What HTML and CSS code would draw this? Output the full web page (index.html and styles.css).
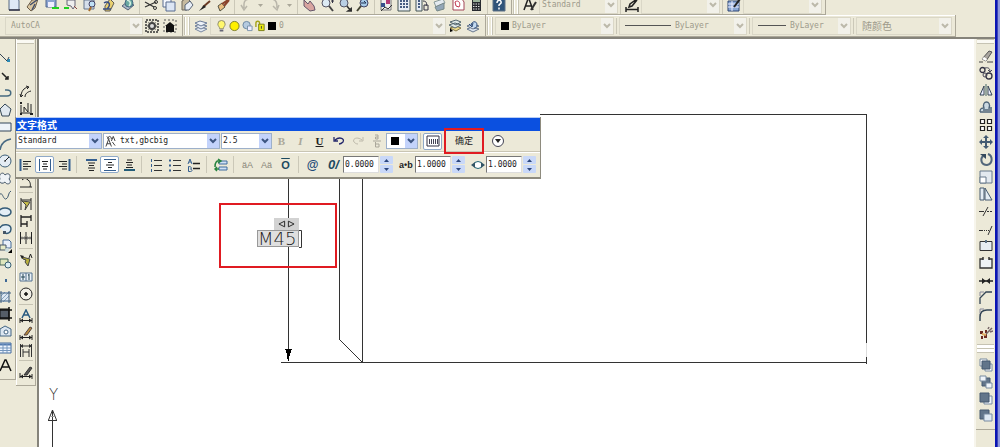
FILE: index.html
```html
<!DOCTYPE html>
<html lang="zh-CN">
<head>
<meta charset="utf-8">
<title>文字格式</title>
<link rel="stylesheet" href="styles.css">
</head>
<body>
<div class="window">
<div class="app">
  <header class="bars">
    <div class="bar-row bar-row-top">
      <div class="bar">
        <div class="tools roomy">
          <button class="tool" aria-label="New"><svg viewBox="0 0 14 14"><path d="M2 0h9l1 3v9H2z" fill="#dfe8f5" stroke="#566884"/><path d="M2 12h11" stroke="#334" stroke-width="1.5"/></svg></button>
          <button class="tool" aria-label="Open"><svg viewBox="0 0 14 14"><path d="M1 9 6 2l6-1-3 9-4 3z" fill="#d9c6a0" stroke="#6b5d49"/><path d="M4 7 11 2M6 12l3-6" stroke="#43506c" stroke-width="1.5"/></svg></button>
          <button class="tool" aria-label="Save"><svg viewBox="0 0 14 14"><path d="M1 0h10v9H1z" fill="#8ba3cf" stroke="#51678f"/><path d="M3 4h6v5H3z" fill="#eef"/><path d="M7 10h7" stroke="#20d020" stroke-width="2"/></svg></button>
          <button class="tool" aria-label="Plot"><svg viewBox="0 0 14 14"><path d="M0 10h5" stroke="#20d020" stroke-width="2"/><path d="M3 7V2h8v6l-2 3-2-3z" fill="#eee" stroke="#667"/><path d="m10 8 3 3" stroke="#844"/></svg></button>
          <button class="tool" aria-label="Preview"><svg viewBox="0 0 14 14"><path d="M1 2h10v9H1z" fill="#d5dfeb" stroke="#65758b"/><circle cx="9" cy="6" r="3" fill="#bfe0f5" stroke="#446"/><path d="m8 9-2 4" stroke="#a76d2c" stroke-width="2"/></svg></button>
          <button class="tool" aria-label="Publish"><svg viewBox="0 0 14 14"><path d="m3 8 5-7 4 4-4 8H3z" fill="#e9d070" stroke="#5f5b52"/><path d="M2 5c4-3 8 1 3 6M1 11h8" fill="none" stroke="#374d83" stroke-width="1.5"/></svg></button>
          <button class="tool" aria-label="Publish web"><svg viewBox="0 0 14 14"><path d="m1 8 5-4 7 3-6 5z" fill="#a9b6c7" stroke="#536277"/><circle cx="8" cy="5" r="4" fill="#69a8a2" stroke="#466983"/><path d="M6 2c4 1 4 4 2 6" fill="none" stroke="#d7eee0" stroke-width="1.5"/></svg></button>
        </div>
        <span class="rule"></span>
        <div class="tools">
          <button class="tool" aria-label="Cut"><svg viewBox="0 0 14 14"><path d="M1 4 10 9M1 9l11-5" stroke="#333" stroke-width="1.3"/><circle cx="11" cy="10" r="1.5" fill="none" stroke="#333"/><circle cx="12" cy="4" r="1.5" fill="none" stroke="#333"/></svg></button>
          <button class="tool" aria-label="Copy"><svg viewBox="0 0 14 14"><path d="M1 1h8v8H1z" fill="#f4f7fd" stroke="#586d90"/><path d="M4 4h9v9H4z" fill="#dce6f5" stroke="#586d90"/></svg></button>
          <button class="tool" aria-label="Paste"><svg viewBox="0 0 14 14"><path d="m2 3 5-3 4 4-4 8H2z" fill="#c6ba9f" stroke="#6d675d"/><path d="m5 7 5-4 3 4-4 5H5z" fill="#e8eef6" stroke="#596475"/></svg></button>
          <button class="tool" aria-label="Match"><svg viewBox="0 0 14 14"><path d="M12 3 5 9" stroke="#6b3b24" stroke-width="2"/><path d="m6 7-5 6 7-4z" fill="#222"/></svg></button>
          <button class="tool" aria-label="Block editor"><svg viewBox="0 0 14 14"><path d="m2 8 4-3 3 4-5 4z" fill="#eabf82" stroke="#554"/><path d="m6 6 6-4M8 8l5-6" stroke="#8b442d" stroke-width="2"/></svg></button>
        </div>
        <span class="rule"></span>
        <div class="tools">
          <button class="tool" aria-label="Undo"><svg viewBox="0 0 14 14"><path d="M10 1C4 2 5 6 5 10M2 7l3 5 3-4" fill="none" stroke="#b9b6aa" stroke-width="1.5"/></svg></button>
          <button class="caret" aria-label="Undo list"><svg viewBox="0 0 5 3"><path d="M0 0h5L2.500 3z" fill="#aaa799"/></svg></button>
          <button class="tool" aria-label="Redo"><svg viewBox="0 0 14 14"><path d="M4 1c5 1 5 5 5 9M5 8l4 4 2-5" fill="none" stroke="#b9b6aa" stroke-width="1.5"/></svg></button>
          <button class="caret" aria-label="Redo list"><svg viewBox="0 0 5 3"><path d="M0 0h5L2.500 3z" fill="#aaa799"/></svg></button>
        </div>
        <span class="rule"></span>
        <div class="tools">
          <button class="tool" aria-label="Pan"><svg viewBox="0 0 14 14"><path d="m2 2 4 4 2-3 4 5 1 4-5 1-6-5z" fill="#d8a5a0" stroke="#64566b"/></svg></button>
          <button class="tool" aria-label="Zoom realtime"><svg viewBox="0 0 14 14"><circle cx="6" cy="5" r="4" fill="#dceaf4" stroke="#556"/><path d="m9 8 4 5" stroke="#444" stroke-width="2"/><path d="M11 3h3M12.500 1v4" stroke="#334"/></svg></button>
          <button class="tool" aria-label="Zoom window"><svg viewBox="0 0 14 14"><circle cx="6" cy="5" r="4" fill="#b9cfe4" stroke="#556"/><path d="m9 8 3 4M10 13h4v-3z" stroke="#333" stroke-width="1.5"/></svg></button>
          <button class="tool" aria-label="Zoom previous"><svg viewBox="0 0 14 14"><circle cx="8" cy="5" r="4" fill="#a5cae8" stroke="#446"/><path d="m5 8-4 5" stroke="#443" stroke-width="2"/><path d="M5 5h5L8 3" stroke="#235" fill="none"/></svg></button>
        </div>
        <span class="rule"></span>
        <div class="tools">
          <button class="tool" aria-label="Properties"><svg viewBox="0 0 14 14"><path d="M2 1h10v11H2z" fill="#eee" stroke="#777"/><path d="M2 5h4v4H2z" fill="#36508c"/><path d="M7 2h4v4H7z" fill="#b13a76"/><path d="m2 13 4-4 3 2 4-4" stroke="#333" fill="none"/></svg></button>
          <button class="tool" aria-label="Design center"><svg viewBox="0 0 14 14"><path d="M1 0h12v13H1z" fill="#e8edf4" stroke="#455"/><path d="M3 3h2M6 3h2M9 3h2M3 6h2M6 6h2M9 6h2M3 9h2M6 9h2M9 9h2" stroke="#465d83" stroke-width="2"/></svg></button>
          <button class="tool" aria-label="Tool palettes"><svg viewBox="0 0 14 14"><path d="M1 0h6v13H1z" fill="#e8edf4" stroke="#455"/><path d="M3 3h2M3 6h2M3 9h2" stroke="#465d83" stroke-width="2"/><path d="M8 3c4 0 4 3 3 5M9 7h4v5H9z" fill="none" stroke="#334"/></svg></button>
          <button class="tool" aria-label="Sheet set"><svg viewBox="0 0 14 14"><path d="m1 4 9-3 2 4-9 4z" fill="#e4eaf0" stroke="#899"/><path d="m2 9 9-4v6l-7 2z" fill="#93a6b7" stroke="#788"/></svg></button>
          <button class="tool" aria-label="Markup"><svg viewBox="0 0 14 14"><path d="M2 1h9l2 3v8H2z" fill="#fff" stroke="#a34759"/><path d="M4 4c4-3 6 2 4 5L5 8z" fill="none" stroke="#c1374e"/></svg></button>
          <button class="tool" aria-label="Calculator"><svg viewBox="0 0 14 14"><path d="M3 0h9v13H3z" fill="#26292e"/><path d="M4 2h7v2H4z" fill="#9ab29a"/><path d="M4 6h7M4 8.500h7M4 11h7" stroke="#ddd" stroke-dasharray="1.500 1"/></svg></button>
        </div>
        <span class="rule"></span>
        <button class="tool" aria-label="Help"><svg viewBox="0 0 14 14"><path d="M1 0h12v13H1z" fill="#2f5379" stroke="#5f7387"/><path d="M5 5c0-4 5-3 4 0L7 7v1M7 9.500v2" fill="none" stroke="#fff" stroke-width="1.500"/></svg></button>
      </div>
      <div class="bar">
        <span class="grip"></span>
        <button class="tool" aria-label="Text style"><svg viewBox="0 0 14 14"><path d="m1 12 4-11h1l4 11M3 8h6" fill="none" stroke="#222" stroke-width="1.500"/><path d="m13 4-5 8" stroke="#333" stroke-width="2"/></svg></button>
        <span class="combo off w-style"><select aria-label="Text style name" disabled><option>Standard</option></select></span>
        <span class="rule"></span>
        <button class="tool" aria-label="Dimension style"><svg viewBox="0 0 14 14"><path d="m12 2-5 6-3 1 1-3 7-5M1 9v5M13 9v5M1 11.500h12" fill="none" stroke="#222" stroke-width="1.500"/></svg></button>
        <span class="combo off w-style"><select aria-label="Dimension style name" disabled><option></option></select></span>
        <span class="rule"></span>
        <button class="tool" aria-label="Table style"><svg viewBox="0 0 14 14"><path d="M1 3h11v10H1z" fill="#8ba8d5" stroke="#2e4674"/><path d="M1 6h11M1 9h11M5 3v10" stroke="#eef"/><path d="m13 1-6 8" stroke="#222" stroke-width="2"/></svg></button>
        <span class="combo off w-style"><select aria-label="Table style name" disabled><option></option></select></span>
      </div>
    </div>
    <div class="bar-row bar-row-second">
      <div class="bar">
        <span class="combo off w-space"><select aria-label="Workspace" disabled><option>AutoCA</option></select></span>
        <button class="tool" aria-label="Workspace settings"><svg viewBox="0 0 14 14"><path d="M1 1h12v12H1z" fill="none" stroke="#333" stroke-width="1.500" stroke-dasharray="2 1"/><circle cx="7" cy="7" r="3" fill="#ddd" stroke="#444" stroke-width="2"/><path d="M7 2v2M7 10v2M2 7h2M10 7h2M3.500 3.500 5 5M9 9l1.500 1.500M3.500 10.500 5 9M9 5l1.500-1.500" stroke="#444"/></svg></button>
        <button class="tool" aria-label="My workspace"><svg viewBox="0 0 14 14"><path d="M1 1h12v12H1z" fill="none" stroke="#555" stroke-dasharray="2 2"/><path d="M2 7 7 3l5 4h-1v6H3V7z" fill="#111"/></svg></button>
      </div>
      <div class="bar">
        <span class="grip"></span>
        <button class="tool" aria-label="Layer manager"><svg viewBox="0 0 14 14"><path d="m1 10 5-2 7 2-6 3z" fill="#e5ebf2" stroke="#7888a0"/><path d="m1 7 5-2 7 2-6 3z" fill="#e5ebf2" stroke="#6a7b98"/><path d="m1 4 5-2 7 2-6 3z" fill="#edf2f8" stroke="#6a7b98"/></svg></button>
        <span class="combo off w-layer">
          <svg class="layer-mark" viewBox="0 0 12 12"><path d="M4 9c0-2-2-3-2-5a4 4 0 0 1 8 0c0 2-2 3-2 5z" fill="#fff86b" stroke="#88866b"/><path d="M4 10h4v2H4z" fill="#667"/></svg>
          <svg class="layer-mark" viewBox="0 0 12 12"><circle cx="6" cy="6" r="5" fill="#fff000" stroke="#77782a"/></svg>
          <svg class="layer-mark" viewBox="0 0 12 12"><circle cx="5" cy="5" r="4" fill="#b6cbe0" stroke="#6682a0"/><path d="M6 6h5v5H6z" fill="#eef" stroke="#7890aa"/></svg>
          <svg class="layer-mark" viewBox="0 0 12 12"><path d="M1 7V3c0-3 4-3 4 0v3" fill="none" stroke="#a6a316" stroke-width="1.500"/><path d="M4 4h6v7H4z" fill="#eaea10" stroke="#777b16"/><path d="M7 6v3" stroke="#444"/></svg>
          <span class="swatch"></span>
          <select aria-label="Layer" disabled><option>0</option></select>
        </span>
        <button class="tool" aria-label="Make current"><svg viewBox="0 0 14 14"><path d="m2 9 6-2 5 2-5 3z" fill="#ecda8b" stroke="#86794a"/><path d="m1 6 6-2 6 2-6 3zM2 3l6-2 5 2-5 3z" fill="#dfe9e8" stroke="#53666f"/><path d="M2 13v-4l3 3z"/></svg></button>
        <button class="tool" aria-label="Layer previous"><svg viewBox="0 0 14 14"><path d="m1 10 5-2 7 2-6 3z" fill="#dce4ed" stroke="#66758b"/><path d="m1 7 5-2 7 2-6 3z" fill="#dce4ed" stroke="#66758b"/><path d="M5 7c0-5 6-6 6-1 0 2-2 4-3 3M3 5l3 3 1-4" fill="#c3daf0" stroke="#2e4c78"/></svg></button>
      </div>
      <div class="bar">
        <span class="grip"></span>
        <span class="combo off w-color"><span class="swatch"></span><select aria-label="Color" disabled><option>ByLayer</option></select></span>
        <span class="rule"></span>
        <span class="combo off w-type"><span class="line line-long"></span><select aria-label="Linetype" disabled><option>ByLayer</option></select></span>
        <span class="rule"></span>
        <span class="combo off w-weight"><span class="line line-short"></span><select aria-label="Lineweight" disabled><option>ByLayer</option></select></span>
        <span class="rule"></span>
        <span class="combo off w-plot"><select class="cjk" aria-label="Plot style" disabled><option>随颜色</option></select></span>
      </div>
    </div>
  </header>

  <div class="work">
    <nav class="palette draw" aria-label="Draw">
      <button aria-label="Line"><svg viewBox="0 0 14 14"><path d="M2 2 9 9l2-4" fill="none" stroke="#345"/><path d="M9 9h2V7" stroke="#2b8ab5" stroke-width="2" fill="none"/></svg></button>
      <button aria-label="Construction line"><svg viewBox="0 0 14 14"><path d="m4 4 6 6M10 7v3H7" stroke="#222" fill="none" stroke-width="1.500"/></svg></button>
      <button aria-label="Polyline"><svg viewBox="0 0 14 14"><path d="M1 10h8c5 0 5-6 0-6H7" fill="none" stroke="#456a80" stroke-width="1.500"/></svg></button>
      <button aria-label="Polygon"><svg viewBox="0 0 14 14"><path d="m7 1 6 5-2 7H4L2 6z" fill="#e0e8ef" stroke="#344757"/></svg></button>
      <button aria-label="Rectangle"><svg viewBox="0 0 14 14"><path d="M1 3h12v8H1z" fill="#eef3f8" stroke="#33465b"/></svg></button>
      <button aria-label="Arc"><svg viewBox="0 0 14 14"><path d="M2 13C3 6 7 3 13 2" fill="none" stroke="#476983" stroke-width="1.500"/></svg></button>
      <button aria-label="Circle"><svg viewBox="0 0 14 14"><circle cx="7" cy="7" r="6" fill="#e5edf4" stroke="#3e607a"/><path d="m7 7 4-4M6 7h2" stroke="#222"/></svg></button>
      <button aria-label="Revision cloud"><svg viewBox="0 0 14 14"><path d="M2 8C0 3 5 0 7 4c3-3 7 0 4 4 4 4-2 7-4 3-3 3-7 0-5-3z" fill="#eff3f6" stroke="#455769"/></svg></button>
      <button aria-label="Spline"><svg viewBox="0 0 14 14"><path d="M1 8c3-7 4 4 7 3s2-7 5-8" fill="none" stroke="#405b70"/></svg></button>
      <button aria-label="Ellipse"><svg viewBox="0 0 14 14"><ellipse cx="7" cy="7" rx="6" ry="4" fill="#e3eef6" stroke="#345b77" stroke-width="1.500"/></svg></button>
      <button aria-label="Ellipse arc"><svg viewBox="0 0 14 14"><path d="M2 6C4 1 13 2 13 7c0 4-4 5-6 4" fill="#e3eef6" stroke="#345b77" stroke-width="1.500"/><path d="M5 9h3v3H5z" fill="#456"/></svg></button>
      <button aria-label="Insert block"><svg viewBox="0 0 14 14"><path d="M5 1h6l2 2v6H5z" fill="#e8f0fa" stroke="#456a94"/><path d="M2 6h6v5H2z" fill="#e6ebc7" stroke="#456"/><circle cx="9" cy="11" r="2" fill="#cdd"/><path d="M14 10v4h-4z"/></svg></button>
      <button aria-label="Make block"><svg viewBox="0 0 14 14"><path d="M2 3h8v6H2z" fill="#dfe7bd" stroke="#45655a"/><circle cx="10" cy="9" r="3" fill="#dceef1" stroke="#396073"/></svg></button>
      <button aria-label="Point"><svg viewBox="0 0 14 14"><path d="M7 6h2v3H7z" fill="#3e6896"/></svg></button>
      <button aria-label="Hatch"><svg viewBox="0 0 14 14"><path d="M3 2h8v10H3z" fill="#dbe6f1"/><path d="m3 6 4-4M3 10l8-8M5 12l6-6" stroke="#8aa6c0"/><path d="M1 3h12M1 11h12M3 1v12M11 1v12" stroke="#3f5f7e"/></svg></button>
      <button aria-label="Gradient"><svg viewBox="0 0 14 14"><path d="M2 2h9v10H2z" fill="#555d68" stroke="#111"/><path d="M1 3h13M1 11h13M11 0v14" stroke="#111" stroke-width="1.500"/></svg></button>
      <button aria-label="Region"><svg viewBox="0 0 14 14"><path d="M2 12V5l5-3 6 3v7z" fill="#dbe6f1" stroke="#426482"/><circle cx="8" cy="8" r="2" fill="#fff" stroke="#426482"/></svg></button>
      <button aria-label="Table"><svg viewBox="0 0 14 14"><path d="M1 2h12v10H1z" fill="#eef5ff" stroke="#426b9e"/><path d="M1 3.500h12" stroke="#527bb0" stroke-width="2"/><path d="M1 7h12M1 9.500h12M5 3v9M9 3v9" stroke="#7496bd"/></svg></button>
      <button aria-label="Multiline text"><svg viewBox="0 0 14 14"><path d="m2 13 5-11h1l5 11M4 9h7" fill="none" stroke="#111" stroke-width="1.500"/></svg></button>
    </nav>
    <nav class="palette dims" aria-label="Dimension">
      <span class="grip-flat"></span>
      <div class="stack">
        <button aria-label="Arc length"><svg viewBox="0 0 14 14"><path d="M2 12C2 6 5 3 9 2M6 12c0-3 2-5 6-6M7 1l3 1-2 2M1 9l1 3 2-2" fill="none" stroke="#222"/></svg></button>
        <button aria-label="Ordinate"><svg viewBox="0 0 14 14"><path d="M2 3v8h11M5 10V5l4 5V1M12 2v8" fill="none" stroke="#222"/><path d="M1 1h2M1 12h2M11 12h3" stroke="#222" stroke-width="2"/></svg></button>
        <button aria-label="Radius"><svg viewBox="0 0 14 14"><circle cx="7" cy="7" r="5" fill="none" stroke="#222"/></svg></button>
        <button aria-label="Jogged"><svg viewBox="0 0 14 14"><path d="m2 12 5-7v5l5-7" fill="none" stroke="#222"/></svg></button>
        <button aria-label="Diameter"><svg viewBox="0 0 14 14"><circle cx="7" cy="7" r="5" fill="none" stroke="#222"/></svg></button>
      </div>
      <div class="stack">
        <button aria-label="Angular"><svg viewBox="0 0 14 14"><path d="m2 3 2-2M1 12h12M8 4c3 2 4 5 3 8M3 5c3-3 5-1 7 1" fill="none" stroke="#222"/></svg></button>
      </div>
      <div class="stack">
        <button aria-label="Quick dimension"><svg viewBox="0 0 14 14"><path d="M2 1v12M12 1v12M2 3h10" stroke="#222"/><path d="m3 4 8 1-5 8 1-5z" fill="#c9bf4a" stroke="#444"/></svg></button>
        <button aria-label="Baseline"><svg viewBox="0 0 14 14"><path d="M2 1v12M8 7v6M12 1v6M2 3h10M2 10h6" stroke="#222" stroke-width="1.300"/></svg></button>
        <button aria-label="Continue"><svg viewBox="0 0 14 14"><path d="M1.500 1v12M7 1v12M12.500 1v12M1 7h12" stroke="#222"/><path d="M3 5.500v3M5.500 5.500v3M8.500 5.500v3M11 5.500v3" stroke="#777"/></svg></button>
      </div>
      <div class="stack">
        <button aria-label="Leader"><svg viewBox="0 0 14 14"><path d="m3 4 8 2-2 7-3-4 1-2-3-1z" fill="#b9b03c" stroke="#444"/><path d="m1 2 4 1-2 3z" fill="#222"/><path d="m10 5 1.500-4L13 5" fill="none" stroke="#222"/></svg></button>
        <button aria-label="Tolerance"><svg viewBox="0 0 14 14"><path d="M1 3h12v8H1zM7 3v8" fill="#eaf1f7" stroke="#53718e"/><path d="M4 4v6M2 7h4M10 4v6M9 5h1" stroke="#245"/></svg></button>
        <button aria-label="Center mark"><svg viewBox="0 0 14 14"><circle cx="7" cy="7" r="6" fill="#f2f0e8" stroke="#222"/><path d="M7 5v4M5 7h4" stroke="#111" stroke-width="1.500"/></svg></button>
      </div>
      <div class="stack">
        <button aria-label="Dimension edit"><svg viewBox="0 0 14 14"><path d="m3 9 4-8 4 8M5 6h4" fill="none" stroke="#285a80" stroke-width="1.500"/><path d="M1 9v5M13 9v5M1 11.500h12" stroke="#222"/><path d="m1 11.500 3-2v4zM13 11.500l-3-2v4z" fill="#222"/></svg></button>
        <button aria-label="Text edit"><svg viewBox="0 0 14 14"><path d="m5 9 6-8 2 1-5 7z" fill="#ba8b38" stroke="#544"/><path d="M1 9v5M13 9v5M1 11.500h12" stroke="#222"/><path d="m1 11.500 3-2v4zM13 11.500l-3-2v4z" fill="#222"/></svg></button>
        <button aria-label="Dimension update"><svg viewBox="0 0 14 14"><path d="M1.500 1v13M12.500 1v13M1 3h12M4 6v8M10 6v8M4 9h6" stroke="#333"/><path d="m1 3 3-2v4zM13 3l-3-2v4z" fill="#333"/></svg></button>
      </div>
      <div class="stack">
        <button aria-label="Style manager"><svg viewBox="0 0 14 14"><path d="m5 10 6-8 2 1-5 7z" fill="#555" stroke="#333"/><path d="M1 8v5M13 9v5M1 11.500h12" stroke="#222"/><path d="m1 11.500 3-2v4zM13 11.500l-3-2v4z" fill="#222"/></svg></button>
      </div>
    </nav>

    <main class="canvas">
      <svg class="sheet" aria-hidden="true">
        <g transform="translate(-39 -39)" fill="none" stroke="#333" shape-rendering="crispEdges">
          <path d="M288.500 150V350M281 362.500H867M362.500 150V362M339.500 150V340M540 114.500H866.500V343M866.500 357V364"/>
          <path d="M866.500 343V357" stroke="#ddd"/>
          <path d="m339.500 339.500 23 23" shape-rendering="auto"/>
          <path d="M285 349h7l-2 5-2 9-1-9z" fill="#000" stroke="none"/>
          <path d="M52.500 410V447M48 420.500h9M48.500 420l4-10 4 10" shape-rendering="auto"/>
          <path d="M50.500 416h4" stroke="#999"/>
        </g>
        <text class="axis" x="10" y="361">Y</text>
      </svg>
      <div class="callout">
        <div class="mtext">
          <div class="stretch"><svg viewBox="0 0 18 8"><path d="M7 1v6L1 4zM11 1v6l6-3z" fill="none" stroke="#222"/></svg></div>
          <div class="entry"><input aria-label="Text" value="M45"><svg class="cursor" viewBox="0 0 4 18"><path d="M0 .5h2.500v17H0" fill="none" stroke="#333"/></svg></div>
        </div>
      </div>
    </main>

    <nav class="palette modify" aria-label="Modify">
      <span class="grip-flat"></span>
      <div class="spread">
        <button aria-label="Erase"><svg viewBox="0 0 14 14"><path d="M0 13h4M8 13h6" stroke="#444"/><path d="m3 10 7-8 3 1-6 9z" fill="#aaa6a0" stroke="#555"/><path d="m3 10 2-2 3 2-1 2z" fill="#fff"/></svg></button>
        <button aria-label="Copy object"><svg viewBox="0 0 14 14"><circle cx="3.500" cy="4" r="2.500" fill="none" stroke="#334" stroke-width="1.300"/><circle cx="10" cy="10" r="3" fill="none" stroke="#334" stroke-width="1.300"/><circle cx="6" cy="9" r="2" fill="none" stroke="#445"/><path d="M6 2c4-1 5 1 5 4M9 4l2 2 2-2" fill="none" stroke="#445"/></svg></button>
        <button aria-label="Mirror"><svg viewBox="0 0 14 14"><path d="M5 3v9H1zM9 3v9h4z" fill="#eef" stroke="#345"/><path d="M7 1v12" stroke="#466"/></svg></button>
        <button aria-label="Offset"><svg viewBox="0 0 14 14"><path d="M1 12h12M1 12c0-4 2-4 4-4-3-8 8-8 5 0h3M4 10h9" fill="#cbd9e2" stroke="#4e6479" stroke-width="1.300"/></svg></button>
        <button aria-label="Array"><svg viewBox="0 0 14 14"><path d="M1.500 1.500h4v4h-4zM8.500 1.500h4v4h-4zM1.500 8.500h4v4h-4zM8.500 8.500h4v4h-4z" fill="#fff" stroke="#222" stroke-width="1.200"/></svg></button>
        <button aria-label="Move"><svg viewBox="0 0 14 14"><path d="M7 2v10M2 7h10" stroke="#445b73" stroke-width="2"/><path d="m7 0 3 3H4zM7 14l3-3H4zM0 7l3-3v6zM14 7l-3-3v6z" fill="#445b73"/></svg></button>
        <button aria-label="Rotate"><svg viewBox="0 0 14 14"><path d="M9 2c5 2 5 10-1 11-6 0-7-6-4-9" fill="none" stroke="#53677b" stroke-width="2"/><path d="M1 2h6v5z" fill="#35495d"/></svg></button>
        <button aria-label="Scale"><svg viewBox="0 0 14 14"><path d="M1 1h12v12H1z" fill="#e3e9ef" stroke="#67798b"/><path d="M1 7h6v6H1z" fill="#fff" stroke="#67798b"/></svg></button>
        <button aria-label="Stretch"><svg viewBox="0 0 14 14"><path d="M1 1h4v12H1zM6 1l7 12H6z" fill="#e5edf3" stroke="#465b70"/></svg></button>
        <button aria-label="Trim"><svg viewBox="0 0 14 14"><path d="M0 7.500h5M4 12 9 3" stroke="#333"/><path d="M8 7.500h6" stroke="#333" stroke-dasharray="2 1"/></svg></button>
        <button aria-label="Extend"><svg viewBox="0 0 14 14"><path d="M0 8.500h4M9 13l4-9" stroke="#333"/><path d="M5 8.500h5" stroke="#333" stroke-dasharray="1 1"/></svg></button>
        <button aria-label="Break at point"><svg viewBox="0 0 14 14"><path d="M1 2.500h12v9H1z" fill="#e8edf2" stroke="#333"/><path d="M6 1h2v3H6z" fill="#607488"/></svg></button>
        <button aria-label="Break"><svg viewBox="0 0 14 14"><path d="M4 3H1v9h12V3h-3" fill="#eef2f5" stroke="#333" stroke-width="1.300"/><path d="M4 1v3M10 1v3" stroke="#333" stroke-width="1.500"/></svg></button>
        <button aria-label="Join"><svg viewBox="0 0 14 14"><path d="M0 7h14" stroke="#222" stroke-width="1.500"/><path d="m3 4 4 3-4 3zM11 4 7 7l4 3z" fill="#222"/></svg></button>
        <button aria-label="Chamfer"><svg viewBox="0 0 14 14"><path d="M1 13V7l6-6h6" fill="none" stroke="#345" stroke-width="1.300"/><path d="M1 5V1h4" stroke="#889" fill="none"/></svg></button>
        <button aria-label="Fillet"><svg viewBox="0 0 14 14"><path d="M1 13V9c0-5 3-7 7-7h5" fill="none" stroke="#345" stroke-width="1.500"/><path d="M1 5V1h4" stroke="#889" fill="none"/></svg></button>
        <button aria-label="Explode"><svg viewBox="0 0 14 14"><path d="M1 5h3v3H1zM5 8h3v4H5zM2 10h2v3H2zM6 4h2v3H6z" fill="#6b2922"/><path d="m7 8 6-6M9 3l1-2M11 6l3-1" stroke="#766" stroke-width="1.500"/><path d="m3 8 4 1" stroke="#dfab60" stroke-width="2"/></svg></button>
      </div>
      <span class="grip-flat grip-double"></span>
      <div class="spread order">
        <button aria-label="Bring to front"><svg viewBox="0 0 14 14"><path d="M1 1h7v7H1zM6 6h7v7H6z" fill="#fff" stroke="#788ba0"/><path d="M3 3h8v8H3z" fill="#62758a" stroke="#445970"/></svg></button>
        <button aria-label="Send to back"><svg viewBox="0 0 14 14"><path d="M3 3h8v8H3z" fill="#62758a" stroke="#445970"/><path d="M1 1h6v5H1zM7 8h6v5H7z" fill="#eff4fa" stroke="#788ba0"/></svg></button>
        <button aria-label="Bring above"><svg viewBox="0 0 14 14"><path d="M5 4h8v8H5z" fill="#eef4fb" stroke="#788ba0"/><path d="M1 1h9v9H1z" fill="#62758a" stroke="#445970"/></svg></button>
        <button aria-label="Send under"><svg viewBox="0 0 14 14"><path d="M1 1h9v9H1z" fill="#62758a" stroke="#445970"/><path d="M5 5h8v7H5z" fill="#dfe9f3" stroke="#788ba0"/></svg></button>
      </div>
    </nav>
  </div>
</div>
<div class="edge"></div>

<section class="format" aria-labelledby="format-title">
  <h1 id="format-title">文字格式</h1>
  <div class="format-row">
    <span class="combo w-fstyle"><select aria-label="Style"><option>Standard</option></select></span>
    <span class="combo w-font"><svg class="font-mark" viewBox="0 0 12 12"><path d="m1 12 3-8 3 8M2 9h4M3 4c0-4 4-4 4 0M7 6l2-5 2 5M2 1l3 3M8 7l3 4" fill="none" stroke="#333"/></svg><select aria-label="Font"><option>txt,gbcbig</option></select></span>
    <span class="combo w-size"><select aria-label="Height"><option>2.5</option></select></span>
    <button class="key letter dim bold" aria-label="Bold">B</button>
    <button class="key letter dim italic" aria-label="Italic">I</button>
    <button class="key letter under" aria-label="Underline">U</button>
    <button class="key" aria-label="Undo edit"><svg viewBox="0 0 14 14"><path d="M3 6c5-4 10-1 8 2-1 1-2 2-4 2M2 3v4h4" fill="none" stroke="#23276b" stroke-width="1.300"/></svg></button>
    <button class="key" aria-label="Redo edit"><svg viewBox="0 0 14 14"><path d="M11 6C6 2 1 5 3 8c1 1 2 2 4 2M12 3v4H8" fill="none" stroke="#bdb9aa"/></svg></button>
    <button class="key" aria-label="Stack"><svg viewBox="0 0 14 14"><path d="M3 7h8M5 1h3v4H5.500V3H8M5.500 8v5H9v-3H6" fill="none" stroke="#aaa79a"/></svg></button>
    <span class="combo w-ink"><span class="swatch"></span><select aria-label="Text color"><option></option></select></span>
    <span class="rule"></span>
    <button class="key pressed" aria-label="Ruler"><svg viewBox="0 0 14 14"><path d="M1 2h12v10H1z" fill="#fff" stroke="#334"/><path d="M3.500 5v5M5.500 5v5M7.500 5v5M9.500 5v5M11.500 5v5" stroke="#445"/></svg></button>
    <button class="confirm">确定</button>
    <button class="key" aria-label="Options"><svg viewBox="0 0 14 14"><circle cx="7" cy="7" r="5.500" fill="#fff" stroke="#445"/><path d="m4 5 3 4 3-4z" fill="#222"/></svg></button>
  </div>
  <div class="format-row format-row-second">
    <div class="keys">
      <button class="key" aria-label="Left"><svg viewBox="0 0 14 14"><path d="M1.500 1v12" stroke="#345f91" stroke-width="2"/><path d="M4 3.500h8M4 6h5M4 8.500h8M4 11h5" stroke="#222"/></svg></button>
      <button class="key pressed" aria-label="Center"><svg viewBox="0 0 14 14"><path d="M1.500 1v12M12.500 1v12" stroke="#345f91"/><path d="M4 3.500h6M5 6h4M4 8.500h6M5 11h4" stroke="#222"/></svg></button>
      <button class="key" aria-label="Right"><svg viewBox="0 0 14 14"><path d="M12.500 1v12" stroke="#345f91" stroke-width="2"/><path d="M2 3.500h8M5 6h5M2 8.500h8M5 11h5" stroke="#222"/></svg></button>
    </div>
    <div class="keys">
      <button class="key" aria-label="Top"><svg viewBox="0 0 14 14"><path d="M2 2h11" stroke="#345f91" stroke-width="2"/><path d="M4 5h7M5 7.500h5M4 10h7M5 12.500h5" stroke="#222"/></svg></button>
      <button class="key pressed" aria-label="Middle"><svg viewBox="0 0 14 14"><path d="M1 1.500h12M1 12.500h12" stroke="#345f91"/><path d="M5 4.500h4M3 7h8M5 9.500h4" stroke="#222"/></svg></button>
      <button class="key" aria-label="Bottom"><svg viewBox="0 0 14 14"><path d="M2 12h11" stroke="#245d79" stroke-width="2"/><path d="M5 2h5M4 4.500h7M5 7h5M4 9.500h7" stroke="#222"/></svg></button>
    </div>
    <div class="keys">
      <button class="key" aria-label="Numbering"><svg viewBox="0 0 14 14"><path d="M5 2.500h8M5 7.500h8M5 12.500h8" stroke="#333"/><path d="M2.500 1v3M2.500 6v3M2.500 11v3" stroke="#345f91"/></svg></button>
      <button class="key" aria-label="Bullets"><svg viewBox="0 0 14 14"><path d="M5 2.500h8M5 7.500h8M5 12.500h8" stroke="#333"/><path d="M1 2.500h2M1 7.500h2M1 12.500h2" stroke="#345f91" stroke-width="2"/></svg></button>
      <button class="key" aria-label="Uppercase list"><svg viewBox="0 0 14 14"><path d="m1 6 2-5 2 5M2 4h2M1.500 8.500v5h2c2 0 2-2 0-2.500 2-.5 1-2.500-2-2.500z" fill="none" stroke="#345f91"/><path d="M6 5.500h7M6 10.500h7" stroke="#222" stroke-width="1.500"/></svg></button>
    </div>
    <div class="keys">
      <button class="key" aria-label="Insert field"><svg viewBox="0 0 14 14"><path d="M5 3h8v3H5zM5 9h8v3H5z" fill="#cfe0f5" stroke="#3f6d9e"/><path d="M1 9c0-5 2-7 5-6M4 1l3 2-3 2M5 11H1M3 9l-2 2 2 2" fill="none" stroke="#26833f" stroke-width="1.500"/></svg></button>
    </div>
    <div class="keys">
      <button class="key caps" aria-label="Uppercase">äA</button>
      <button class="key caps" aria-label="Lowercase">Aä</button>
      <button class="key over" aria-label="Overline">O</button>
    </div>
    <div class="keys">
      <button class="key at" aria-label="Symbol">@</button>
    </div>
    <label class="num"><span class="oblique">0/</span><input aria-label="Oblique angle" value="0.0000"><span class="spin"><button aria-label="Increase angle"><svg viewBox="0 0 5 3"><path d="M0 3h5L2.500 0z"/></svg></button><button aria-label="Decrease angle"><svg viewBox="0 0 5 3"><path d="M0 0h5L2.500 3z"/></svg></button></span></label>
    <label class="num"><span class="track">a•b</span><input aria-label="Tracking" value="1.0000"><span class="spin"><button aria-label="Increase tracking"><svg viewBox="0 0 5 3"><path d="M0 3h5L2.500 0z"/></svg></button><button aria-label="Decrease tracking"><svg viewBox="0 0 5 3"><path d="M0 0h5L2.500 3z"/></svg></button></span></label>
    <label class="num"><svg class="wide" viewBox="0 0 14 10"><ellipse cx="7" cy="5" rx="4" ry="3.500" fill="#fff" stroke="#267"/><path d="M0 5l4-3v6zM14 5l-4-3v6z" fill="#356"/></svg><input aria-label="Width factor" value="1.0000"><span class="spin"><button aria-label="Increase width"><svg viewBox="0 0 5 3"><path d="M0 3h5L2.500 0z"/></svg></button><button aria-label="Decrease width"><svg viewBox="0 0 5 3"><path d="M0 0h5L2.500 3z"/></svg></button></span></label>
  </div>
</section>
</div>
</body>
</html>
```

FILE: styles.css
```css
* {
  box-sizing: border-box;
}

body {
  margin: 0;
  background: #ece9d8;
  font: 8px/12px "DejaVu Sans Mono", "Noto Sans CJK SC", monospace;
  color: #222;
}

button,
select,
input {
  margin: 0;
  padding: 0;
  border: 0;
  border-radius: 0;
  background: none;
  color: inherit;
  font: inherit;
}

button {
  display: flex;
  align-items: center;
  justify-content: center;
}

.window {
  position: relative;
  display: flex;
  height: 100vh;
  overflow: hidden;
}

.app {
  flex: 1;
  min-width: 0;
  display: flex;
  flex-direction: column;
}

.edge {
  width: 5px;
  background: linear-gradient(90deg, #0a14b4 0 2px, #3a44b8 2px 3px, #8f98dc 3px);
}

/* Docked toolbars */
.bar-row {
  display: flex;
  overflow: hidden;
}

.bar-row-top {
  height: 15px;
  align-items: flex-end;
}

.bar-row-second {
  height: 24px;
  align-items: stretch;
  border-bottom: 2px solid #85837a;
}

.bar {
  display: flex;
  align-items: center;
  height: 22px;
  padding-right: 3px;
  border: solid #aca899;
  border-width: 0 1px 1px 0;
  box-shadow: inset 0 1px #fff;
}

.bar:first-child {
  padding-left: 5px;
}

.bar-row-top .bar {
  align-items: flex-end;
}

.tools {
  display: flex;
}

.roomy {
  gap: 1px;
}

.tool {
  width: 18px;
  height: 18px;
}

.tool svg {
  width: 14px;
  height: 14px;
}

.caret {
  width: 11px;
}

.caret svg {
  width: 5px;
}

.rule {
  flex: none;
  width: 1px;
  height: 16px;
  margin: 0 2px;
  background: #cbc8b8;
}

.grip {
  flex: none;
  width: 6px;
  height: 18px;
  margin: 0 2px 0 1px;
  border: solid #c6c3b3;
  border-width: 0 1px;
  background: linear-gradient(90deg, #fff 1px, transparent 1px 3px, #fff 3px);
}

/* Drop-down boxes */
.combo {
  position: relative;
  display: flex;
  align-items: center;
  flex: none;
  height: 16px;
  padding-left: 1px;
  border: 1px solid #9db0ca;
  background: #fff;
}

.combo::after {
  content: "";
  position: absolute;
  top: 0;
  right: 0;
  bottom: 0;
  width: 12px;
  background: #c3d3fb url("data:image/svg+xml,%3Csvg xmlns='http://www.w3.org/2000/svg' width='8' height='6'%3E%3Cpath d='M1 1l3 3 3-3' fill='none' stroke='%233c5480' stroke-width='2'/%3E%3C/svg%3E") center no-repeat;
  pointer-events: none;
}

.combo select {
  flex: 1;
  min-width: 0;
  height: 100%;
  appearance: none;
  opacity: 1;
}

.combo.off {
  height: 18px;
  padding-left: 5px;
  border-color: #dad7c7;
  background: #ece9d8;
  color: #9d9a8b;
}

.combo.off::after {
  background: #f2f1ea url("data:image/svg+xml,%3Csvg xmlns='http://www.w3.org/2000/svg' width='8' height='6'%3E%3Cpath d='M1 1l3 3 3-3' fill='none' stroke='%23bcb9aa' stroke-width='2'/%3E%3C/svg%3E") center no-repeat;
}

.combo .cjk {
  font-family: "Noto Sans CJK SC", sans-serif;
  font-size: 10px;
}

.w-style { width: 79px; }
.w-space { width: 138px; }
.w-layer { width: 236px; }
.w-color { width: 119px; }
.w-type { width: 128px; }
.w-weight { width: 99px; }
.w-plot { width: 96px; }
.w-fstyle { width: 86px; }
.w-font { width: 117px; }
.w-size { width: 51px; }
.w-ink { width: 32px; }

.combo.w-style {
  padding-left: 2px;
}

.layer-mark {
  flex: none;
  width: 11px;
  height: 12px;
  margin-right: 2px;
}

.font-mark {
  width: 11px;
  height: 12px;
  margin-right: 4px;
}

.swatch {
  flex: none;
  width: 8px;
  height: 8px;
  margin-right: 3px;
  background: #000;
}

.w-ink .swatch {
  margin-left: 3px;
}

.line {
  flex: none;
  height: 1px;
  margin-right: 4px;
  background: #555;
}

.line-long { width: 46px; }
.line-short { width: 28px; }

/* Side palettes */
.work {
  flex: 1;
  min-height: 0;
  display: flex;
  align-items: flex-start;
}

.palette {
  flex: none;
  display: flex;
  flex-direction: column;
}

.palette button {
  width: 14px;
  height: 17px;
}

.palette svg {
  width: 14px;
  height: 14px;
}

.draw {
  width: 16px;
  padding: 11px 3px 6px 0;
  align-items: flex-end;
  overflow: hidden;
  border: solid #aca899;
  border-width: 0 1px 1px 0;
}

.dims {
  width: 20px;
  align-items: center;
  padding-bottom: 5px;
  border: solid #aca899;
  border-width: 0 1px 1px 0;
  box-shadow: inset 1px 0 #fff;
}

.grip-flat {
  align-self: stretch;
  flex: none;
  height: 5px;
  margin: 0 1px 39px;
  border: solid #c6c3b3;
  border-width: 1px 0;
  background: #faf9f3;
}

.stack + .stack {
  padding-top: 2px;
  margin-top: 2px;
  border-top: 1px solid #c6c3b3;
}

.modify {
  width: 21px;
  align-items: center;
  align-self: stretch;
  border-left: 2px solid #f7f5ec;
}

.modify .grip-flat {
  margin-bottom: 3px;
}

.modify .grip-double {
  height: 9px;
  margin-top: 3px;
  background: linear-gradient(#fff 0 3px, #c6c3b3 3px 4px, #fff 4px);
}

.spread {
  display: flex;
  flex-direction: column;
  justify-content: space-between;
  height: 294px;
}

.order {
  align-self: stretch;
  align-items: center;
  height: 74px;
  padding-bottom: 4px;
  border-bottom: 1px solid #aca899;
}

/* Drawing area */
.canvas {
  position: relative;
  flex: 1;
  align-self: stretch;
  min-width: 0;
  margin-left: 1px;
  overflow: hidden;
  border-left: 2px solid #85837a;
  background: #fff;
}

.sheet {
  position: absolute;
  inset: 0;
  width: 100%;
  height: 100%;
}

.axis {
  font: 200 15px "DejaVu Sans", sans-serif;
  fill: #333;
}

.callout {
  position: absolute;
  left: 180px;
  top: 164px;
  width: 118px;
  height: 65px;
  padding: 13px 0 0 36px;
  border: 2px solid #e01b22;
}

.mtext {
  display: flex;
  flex-direction: column;
  align-items: flex-start;
}

.stretch {
  display: flex;
  align-items: center;
  justify-content: center;
  width: 25px;
  height: 12px;
  margin-left: 17px;
  background: #d2d2d2;
}

.stretch svg {
  width: 17px;
  height: 8px;
}

.entry {
  display: flex;
  height: 18px;
}

.entry input {
  width: 42px;
  height: 17px;
  border: 1px solid #999;
  background: #dfdfdf;
  font: 200 18px/15px "DejaVu Sans", sans-serif;
}

.cursor {
  width: 4px;
  height: 18px;
}

/* Floating text editor bar */
.format {
  position: absolute;
  left: 15px;
  top: 117px;
  width: 526px;
  border: solid #8e8b7e;
  border-width: 0 1px 2px;
  background: #ece9d8;
}

.format h1 {
  margin: 0;
  height: 14px;
  padding-left: 1px;
  border-top: 1px solid #b8cdf5;
  background: #0b50e0;
  color: #fff;
  font: bold 10px/13px "Noto Sans CJK SC", sans-serif;
}

.format-row {
  display: flex;
  align-items: center;
  height: 20px;
}

.format-row .combo + .combo {
  margin-left: 1px;
}

.format-row-second {
  height: 26px;
  border-top: 1px solid #c9c5b4;
  box-shadow: inset 0 1px #fff;
}

.keys {
  display: flex;
}

.keys + .keys {
  margin-left: 3px;
  padding-left: 4px;
  border-left: 1px solid #cbc8b8;
}

.key {
  width: 19px;
  height: 17px;
}

.key svg {
  width: 14px;
  height: 14px;
}

.pressed {
  border: 1px solid #8fa9c8;
  border-radius: 2px;
  background: #fff;
}

.letter {
  font: bold 11px/14px "Liberation Serif", serif;
}

.dim { color: #aaa799; }
.italic { font-style: italic; }
.under { text-decoration: underline; }

.caps {
  color: #888578;
  font: 9px/14px "Liberation Sans", sans-serif;
}

.over {
  color: #1c4960;
  font: bold 11px/12px "Liberation Sans", sans-serif;
  text-decoration: overline;
}

.at {
  color: #1c4a78;
  font: bold 12px/14px "Liberation Sans", sans-serif;
}

.confirm {
  width: 40px;
  height: 26px;
  margin: 0 4px 0 2px;
  border: 2px solid #e01b22;
  font: 9px/14px "Noto Sans CJK SC", sans-serif;
}

.num {
  display: flex;
  align-items: center;
  margin-left: 6px;
}

.num input {
  width: 36px;
  height: 17px;
  padding-left: 1px;
  border: 1px solid #888;
  border-color: #777 #ddd #ddd #777;
  background: #fff;
}

.spin {
  display: flex;
  flex-direction: column;
  gap: 1px;
  width: 13px;
  margin-left: 1px;
}

.spin button {
  height: 8px;
  border-radius: 1px;
  background: #c9d8f8;
}

.spin svg {
  width: 5px;
  height: 3px;
  fill: #2c467c;
}

.oblique {
  width: 15px;
  color: #1c4960;
  font: italic bold 13px/16px "Liberation Sans", sans-serif;
}

.track {
  width: 16px;
  font: bold 9px/12px "Liberation Sans", sans-serif;
}

.wide {
  width: 14px;
  height: 10px;
  margin-right: 1px;
}
```
